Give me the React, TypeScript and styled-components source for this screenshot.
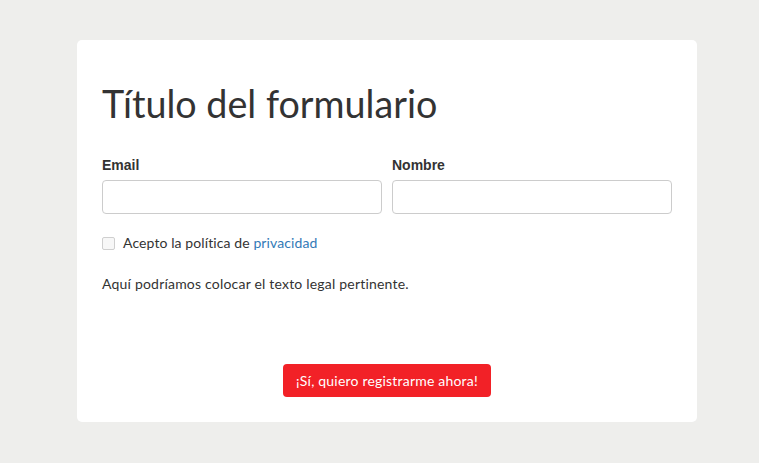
import styled, { createGlobalStyle } from 'styled-components'

const GlobalStyles = createGlobalStyle`
  html, body {
    margin: 0;
    padding: 0;
    background: #eeeeec;
  }
  body {
    font-family: "Nunito", Lato, "Open Sans", sans-serif;
    color: #333;
  }
`

const Page = styled.div`
  width: 759px;
  height: 463px;
  padding: 40px 0 0 77px;
  box-sizing: border-box;
  display: flex;
`

const Card = styled.form`
  width: 620px;
  height: 382px;
  box-sizing: border-box;
  background: #fff;
  border-radius: 5px;
  padding: 41px 25px 0 25px;
  display: flex;
  flex-direction: column;
`

const Title = styled.h1`
  margin: 0;
  font-family: Lato, sans-serif;
  font-weight: 400;
  font-size: 37.7px;
  line-height: 45px;
  color: #333;
`

const Row = styled.div`
  display: grid;
  grid-template-columns: 1fr 1fr;
  gap: 10px;
  margin-top: 31px;
`

const Field = styled.div`
  display: flex;
  flex-direction: column;
`

const Label = styled.label`
  font-family: "Liberation Sans", Arial, sans-serif;
  font-weight: 700;
  font-size: 14px;
  line-height: 16px;
  margin-bottom: 7px;
  color: #333;
`

const Input = styled.input`
  height: 34px;
  box-sizing: border-box;
  border: 1px solid #ccc;
  border-radius: 4px;
  padding: 6px 12px;
  font-size: 14px;
  outline: none;
`

const CheckRow = styled.label`
  display: flex;
  align-items: center;
  gap: 8px;
  margin-top: 21px;
  font-family: Lato, sans-serif;
  font-size: 14px;
  line-height: 16px;
  letter-spacing: 0.1px;
  color: #333;
`

const Box = styled.span`
  width: 11px;
  height: 11px;
  border: 1px solid #cfcfcf;
  border-radius: 2px;
  background: #f7f7f7;
`

const Link = styled.a`
  color: #337ab7;
  text-decoration: none;
`

const Legal = styled.p`
  margin: 25px 0 0 0;
  font-family: Lato, sans-serif;
  font-size: 14px;
  line-height: 16px;
  letter-spacing: 0.2px;
  color: #333;
`

const Actions = styled.div`
  display: flex;
  justify-content: center;
  margin-top: 72px;
`

const Submit = styled.button`
  height: 33px;
  padding: 0 13px;
  border: none;
  border-radius: 4px;
  background: #f22127;
  color: #fff;
  font-family: Lato, sans-serif;
  font-size: 14px;
  letter-spacing: 0.2px;
  cursor: pointer;
`

const App = () => {
  return (
    <>
      <GlobalStyles />
      <Page>
        <Card onSubmit={e => e.preventDefault()}>
          <Title>Título del formulario</Title>
          <Row>
            <Field>
              <Label>Email</Label>
              <Input type="email" />
            </Field>
            <Field>
              <Label>Nombre</Label>
              <Input type="text" />
            </Field>
          </Row>
          <CheckRow>
            <Box />
            <span>
              Acepto la política de <Link href="#">privacidad</Link>
            </span>
          </CheckRow>
          <Legal>Aquí podríamos colocar el texto legal pertinente.</Legal>
          <Actions>
            <Submit type="submit">¡Sí, quiero registrarme ahora!</Submit>
          </Actions>
        </Card>
      </Page>
    </>
  )
}

export default App
